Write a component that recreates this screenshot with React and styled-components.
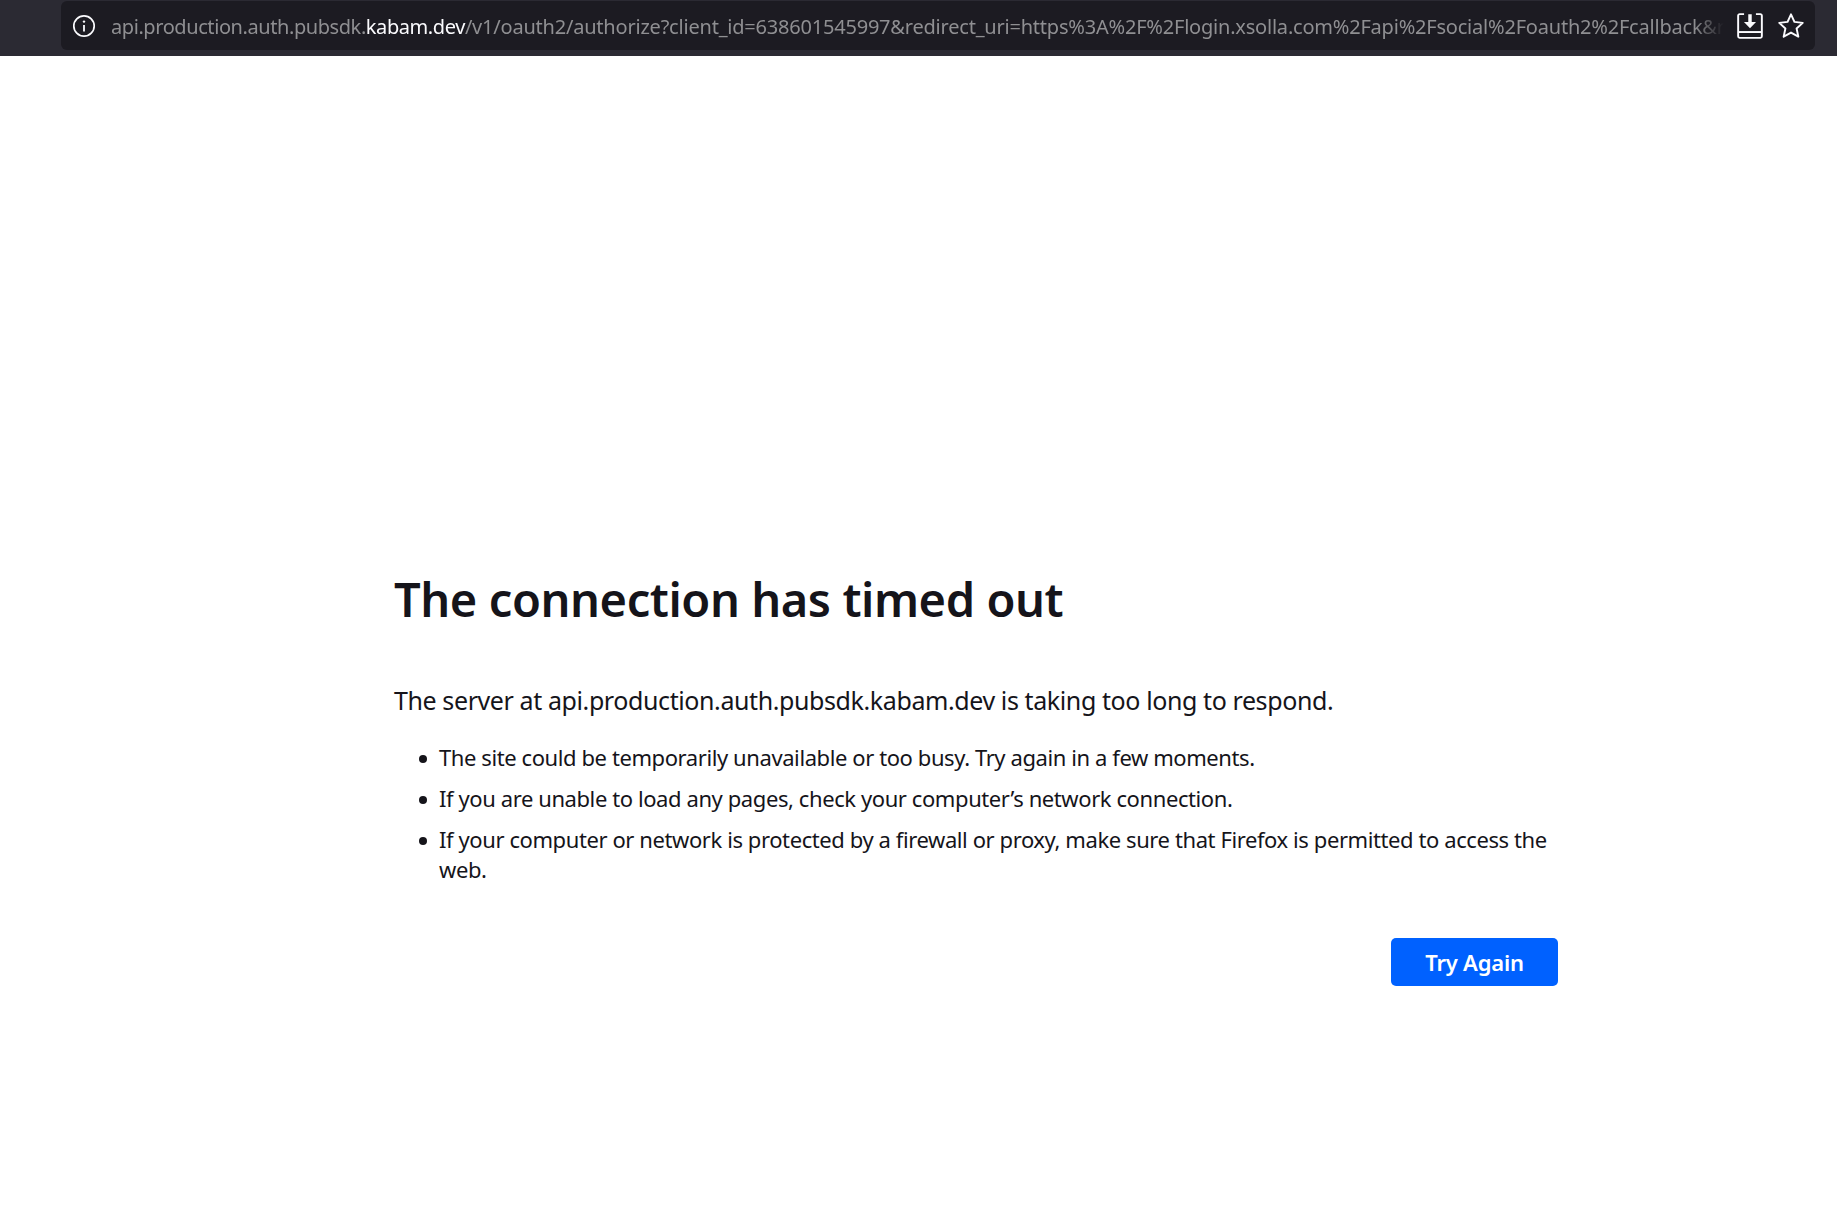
import React from "react";
import styled, { createGlobalStyle } from "styled-components";

const GlobalStyle = createGlobalStyle`
  html, body {
    margin: 0;
    padding: 0;
    background: #fff;
  }
  body {
    font-family: "Noto Sans", "Open Sans", sans-serif;
    color: #15141a;
  }
`;

const URL_PATH =
  "/v1/oauth2/authorize?client_id=638601545997&redirect_uri=https%3A%2F%2Flogin.xsolla.com%2Fapi%2Fsocial%2Foauth2%2Fcallback&response_type=code&scope=openid";

export default function App() {
  return (
    <Page>
      <GlobalStyle />
      <Toolbar>
        <UrlBar>
          <InfoIcon viewBox="0 0 24 24">
            <circle cx="12" cy="12" r="10.2" fill="none" stroke="#fbfbfe" strokeWidth="1.7" />
            <circle cx="12" cy="7.6" r="1.2" fill="#fbfbfe" />
            <path d="M12 11v6.6" stroke="#fbfbfe" strokeWidth="1.8" fill="none" />
          </InfoIcon>
          <UrlText>
            <Origin>
              api.production.auth.pubsdk.<Host>kabam.dev</Host>
            </Origin>
            {URL_PATH}
          </UrlText>
          <ActionIcon viewBox="0 0 26 26">
            <path d="M7.5 2H3.4C2.6 2 2 2.6 2 3.4V22.6C2 23.4 2.6 24 3.4 24H22.6C23.4 24 24 23.4 24 22.6V3.4C24 2.6 23.4 2 22.6 2H18.5" fill="none" stroke="#fbfbfe" strokeWidth="1.8" />
            <path d="M2 18.6H24" stroke="#fbfbfe" strokeWidth="1.8" fill="none" />
            <path d="M11.4 2H14.6V9.4H18.6L13 15L7.4 9.4H11.4Z" fill="#fbfbfe" />
          </ActionIcon>
          <StarIcon viewBox="0 0 26 26">
            <path d="M13 2.2L16.2 9.2L23.9 10.1L18.2 15.3L19.8 22.9L13 19.1L6.2 22.9L7.8 15.3L2.1 10.1L9.8 9.2Z" fill="none" stroke="#fbfbfe" strokeWidth="1.8" strokeLinejoin="round" />
          </StarIcon>
        </UrlBar>
      </Toolbar>
      <Main>
        <Title>The connection has timed out</Title>
        <Lead>The server at api.production.auth.pubsdk.kabam.dev is taking too long to respond.</Lead>
        <Tips>
          <li>The site could be temporarily unavailable or too busy. Try again in a few moments.</li>
          <li>If you are unable to load any pages, check your computer’s network connection.</li>
          <li>If your computer or network is protected by a firewall or proxy, make sure that Firefox is permitted to access the web.</li>
        </Tips>
        <Actions>
          <RetryButton type="button">Try Again</RetryButton>
        </Actions>
      </Main>
    </Page>
  );
}

const Page = styled.div`
  min-height: 1219px;
  background: #fff;
`;

const Toolbar = styled.div`
  height: 56px;
  box-sizing: border-box;
  padding: 1px 22px 0 61px;
  background: #2b2a33;
`;

const UrlBar = styled.div`
  height: 49px;
  box-sizing: border-box;
  display: flex;
  align-items: center;
  padding: 0 10px 0 11px;
  background: #1c1b22;
  border-radius: 6px;
`;

const InfoIcon = styled.svg`
  width: 24px;
  height: 24px;
  flex: none;
  margin-right: 15px;
`;

const UrlText = styled.div`
  flex: 1;
  min-width: 0;
  padding-top: 1px;
  overflow: hidden;
  white-space: nowrap;
  font-size: 20px;
  letter-spacing: -0.21px;
  color: #8f8f92;
  -webkit-mask-image: linear-gradient(to right, #000 calc(100% - 30px), transparent);
  mask-image: linear-gradient(to right, #000 calc(100% - 30px), transparent);
`;

const Origin = styled.span`
  letter-spacing: -0.42px;
`;

const Host = styled.span`
  color: #fbfbfe;
`;

const ActionIcon = styled.svg`
  width: 28px;
  height: 28px;
  flex: none;
  margin-left: 12px;
`;

const StarIcon = styled(ActionIcon)`
  margin-left: 13px;
`;

const Main = styled.main`
  width: 1164px;
  margin-left: 394px;
  padding-top: 510px;
`;

const Title = styled.h1`
  margin: 0;
  font-size: 47px;
  line-height: 66px;
  font-weight: 600;
  letter-spacing: -0.43px;
`;

const Lead = styled.p`
  margin: 51px 0 0;
  font-size: 25px;
  line-height: 34px;
  letter-spacing: -0.4px;
`;

const Tips = styled.ul`
  margin: 26px 0 0;
  padding: 0 0 0 45px;
  list-style: none;
  font-size: 22px;
  line-height: 29.5px;
  letter-spacing: -0.41px;

  li + li {
    margin-top: 11.5px;
  }

  li::before {
    content: "";
    display: inline-block;
    width: 8px;
    height: 8px;
    margin-left: -20px;
    margin-right: 12px;
    border-radius: 50%;
    background: #15141a;
    vertical-align: 3px;
  }
`;

const Actions = styled.div`
  display: flex;
  justify-content: flex-end;
  margin-top: 54px;
`;

const RetryButton = styled.button`
  width: 167px;
  height: 48px;
  padding: 0;
  border: none;
  border-radius: 5px;
  background: #0061ff;
  color: #fff;
  font-family: inherit;
  font-size: 22px;
  font-weight: 600;
  letter-spacing: -0.2px;
`;
